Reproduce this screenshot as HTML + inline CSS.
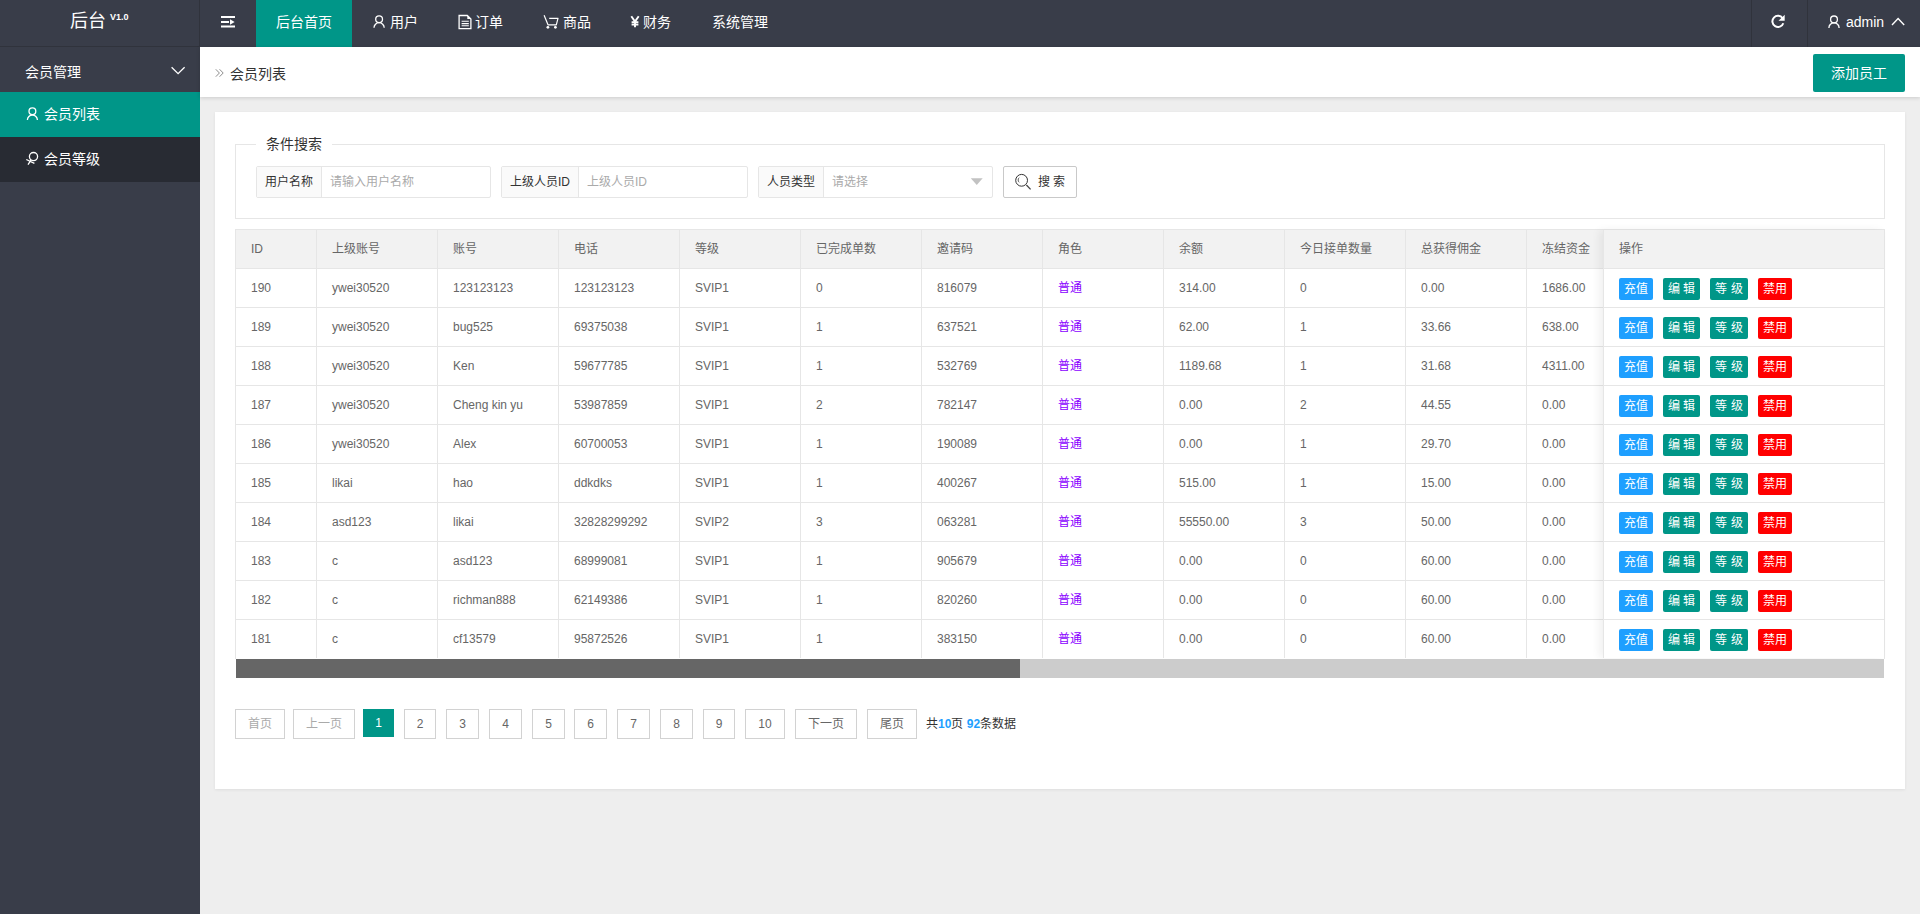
<!DOCTYPE html>
<html lang="zh-CN"><head><meta charset="utf-8"><title>后台</title>
<style>
*{margin:0;padding:0;box-sizing:border-box}
html,body{width:1920px;height:914px;overflow:hidden}
body{font-family:"Liberation Sans",sans-serif;font-size:14px;color:#333;background:#eeeeee;position:relative}
.a{position:absolute}
.hdr{position:absolute;left:0;top:0;width:1920px;height:47px;background:#393D49}
.logo{position:absolute;left:0;top:0;width:200px;height:46px;color:#fff;border-right:1px solid #30333c}
.logo .t{position:absolute;left:70px;top:10px;font-size:18px;line-height:22px}
.logo sup{position:absolute;left:110px;top:11px;font-size:9px;font-weight:bold;line-height:12px}
.nav .it{position:absolute;top:0;height:47px;line-height:45px;color:#fff;font-size:14px;white-space:nowrap}
.act{background:#009688}
.side{position:absolute;left:0;top:46px;width:200px;height:868px;background:#393D49;border-top:1px solid #30333c}
.side .grp{position:absolute;left:0;top:0;width:200px;height:46px;color:#fff}
.side .sub{position:absolute;left:0;width:200px;height:45px;line-height:45px;color:#fff}
.crumb{position:absolute;left:200px;top:47px;width:1720px;height:50px;background:#fff;box-shadow:0 1px 4px rgba(0,0,0,.15)}
.addbtn{position:absolute;left:1813px;top:54px;width:92px;height:38px;line-height:38px;background:#009688;color:#fff;text-align:center;border-radius:2px;font-size:14px}
.card{position:absolute;left:215px;top:112px;width:1690px;height:677px;background:#fff;box-shadow:0 1px 3px rgba(0,0,0,.07)}
.fs{position:absolute;left:235px;top:144px;width:1650px;height:75px;border:1px solid #e6e6e6}
.lg{position:absolute;left:256px;top:135px;padding:0 10px;background:#fff;font-size:14px;line-height:18px;color:#333}
.ig{position:absolute;top:166px;height:32px;border:1px solid #e6e6e6;border-radius:2px;background:#fff}
.ig .lb{position:absolute;left:0;top:0;height:30px;line-height:30px;background:#fafafa;border-right:1px solid #e6e6e6;font-size:12px;color:#333;padding-left:8px}
.ig .ph{position:absolute;top:0;line-height:30px;font-size:12px;color:#aaa}
.sbtn{position:absolute;left:1003px;top:166px;width:74px;height:32px;border:1px solid #c9c9c9;border-radius:2px;background:#fff;font-size:12px;color:#333}
.tb{position:absolute;left:235px;top:229px;width:1650px;height:430px;border:1px solid #e6e6e6;border-bottom:0}
.thbg{position:absolute;left:236px;top:230px;width:1648px;height:38px;background:#f2f2f2}
.hl{position:absolute;left:236px;width:1648px;height:1px;background:#e6e6e6}
.vl{position:absolute;top:230px;width:1px;height:428px;background:#e6e6e6}
.th{position:absolute;top:230px;height:38px;line-height:38px;font-size:12px;color:#666;white-space:nowrap}
.td{position:absolute;height:38px;line-height:38px;font-size:12px;color:#666;white-space:nowrap}
.pu{color:#8a00ff}
.fx{position:absolute;left:1603px;top:230px;width:281px;height:428px;background:#fff;border-left:1px solid #e6e6e6;box-shadow:-4px 0 8px rgba(0,0,0,.06)}
.fxh{position:absolute;left:0;top:0;width:280px;height:38px;background:#f2f2f2}
.fhl{position:absolute;left:0;width:280px;height:1px;background:#e6e6e6}
.bt{position:absolute;height:22px;line-height:22px;text-align:center;color:#fff;font-size:12px;border-radius:2px;white-space:nowrap}
.b1{background:#1E9FFF}.b2{background:#009688}.b3{background:#FF0000}
.sc{position:absolute;left:236px;top:659px;width:1648px;height:19px;background:#cccccc}
.sct{position:absolute;left:0;top:0;width:784px;height:19px;background:#666666}
.pg{position:absolute;top:709px;height:30px;line-height:28px;border:1px solid #d2d2d2;background:#fff;color:#666;font-size:12px;text-align:center}
.pg.dis{color:#aaa}
.pg.cur{height:28px;line-height:28px;background:#009688;border:0;color:#fff}
.pginfo{position:absolute;left:926px;top:709px;line-height:30px;font-size:12px;color:#333;white-space:nowrap}
.pginfo b{color:#1E9FFF}
svg{display:block}
</style></head>
<body>
<div class="hdr">
  <div class="logo"><span class="t">后台</span><sup>V1.0</sup></div>
  <div class="nav">
    <div class="it act" style="left:256px;width:96px;text-align:center">后台首页</div>
    <div class="it" style="left:390px">用户</div>
    <div class="it" style="left:475px">订单</div>
    <div class="it" style="left:563px">商品</div>
    <div class="it" style="left:643px">财务</div>
    <div class="it" style="left:712px">系统管理</div>
    <div class="it" style="left:1846px">admin</div>
  </div>
</div>
<div class="side">
  <div class="grp"><span style="position:absolute;left:25px;top:14px">会员管理</span></div>
  <div class="sub" style="top:45px;background:#009688"><span style="position:absolute;left:44px">会员列表</span></div>
  <div class="sub" style="top:90px;background:#282B33"><span style="position:absolute;left:44px">会员等级</span></div>
</div>
<div class="crumb"><span style="position:absolute;left:30px;top:16px;color:#333">会员列表</span></div>
<div class="addbtn">添加员工</div>
<div class="card"></div>
<div class="fs"></div>
<div class="lg">条件搜索</div>
<div class="ig" style="left:256px;width:235px"><div class="lb" style="width:65px">用户名称</div><div class="ph" style="left:73px">请输入用户名称</div></div>
<div class="ig" style="left:501px;width:247px"><div class="lb" style="width:77px">上级人员ID</div><div class="ph" style="left:85px">上级人员ID</div></div>
<div class="ig" style="left:758px;width:235px"><div class="lb" style="width:65px">人员类型</div><div class="ph" style="left:73px">请选择</div></div>
<div class="sbtn"><span style="position:absolute;left:34px;top:0;line-height:30px">搜&nbsp;索</span></div>
<div class="tb"></div>
<div class="thbg"></div>
<div class="hl" style="top:268px"></div>
<div class="hl" style="top:307px"></div>
<div class="hl" style="top:346px"></div>
<div class="hl" style="top:385px"></div>
<div class="hl" style="top:424px"></div>
<div class="hl" style="top:463px"></div>
<div class="hl" style="top:502px"></div>
<div class="hl" style="top:541px"></div>
<div class="hl" style="top:580px"></div>
<div class="hl" style="top:619px"></div>
<div class="vl" style="left:316px"></div>
<div class="vl" style="left:437px"></div>
<div class="vl" style="left:558px"></div>
<div class="vl" style="left:679px"></div>
<div class="vl" style="left:800px"></div>
<div class="vl" style="left:921px"></div>
<div class="vl" style="left:1042px"></div>
<div class="vl" style="left:1163px"></div>
<div class="vl" style="left:1284px"></div>
<div class="vl" style="left:1405px"></div>
<div class="vl" style="left:1526px"></div>
<div class="th" style="left:251px">ID</div>
<div class="th" style="left:332px">上级账号</div>
<div class="th" style="left:453px">账号</div>
<div class="th" style="left:574px">电话</div>
<div class="th" style="left:695px">等级</div>
<div class="th" style="left:816px">已完成单数</div>
<div class="th" style="left:937px">邀请码</div>
<div class="th" style="left:1058px">角色</div>
<div class="th" style="left:1179px">余额</div>
<div class="th" style="left:1300px">今日接单数量</div>
<div class="th" style="left:1421px">总获得佣金</div>
<div class="th" style="left:1542px">冻结资金</div>
<div class="td" style="left:251px;top:269px">190</div>
<div class="td" style="left:332px;top:269px">ywei30520</div>
<div class="td" style="left:453px;top:269px">123123123</div>
<div class="td" style="left:574px;top:269px">123123123</div>
<div class="td" style="left:695px;top:269px">SVIP1</div>
<div class="td" style="left:816px;top:269px">0</div>
<div class="td" style="left:937px;top:269px">816079</div>
<div class="td pu" style="left:1058px;top:269px">普通</div>
<div class="td" style="left:1179px;top:269px">314.00</div>
<div class="td" style="left:1300px;top:269px">0</div>
<div class="td" style="left:1421px;top:269px">0.00</div>
<div class="td" style="left:1542px;top:269px">1686.00</div>
<div class="td" style="left:251px;top:308px">189</div>
<div class="td" style="left:332px;top:308px">ywei30520</div>
<div class="td" style="left:453px;top:308px">bug525</div>
<div class="td" style="left:574px;top:308px">69375038</div>
<div class="td" style="left:695px;top:308px">SVIP1</div>
<div class="td" style="left:816px;top:308px">1</div>
<div class="td" style="left:937px;top:308px">637521</div>
<div class="td pu" style="left:1058px;top:308px">普通</div>
<div class="td" style="left:1179px;top:308px">62.00</div>
<div class="td" style="left:1300px;top:308px">1</div>
<div class="td" style="left:1421px;top:308px">33.66</div>
<div class="td" style="left:1542px;top:308px">638.00</div>
<div class="td" style="left:251px;top:347px">188</div>
<div class="td" style="left:332px;top:347px">ywei30520</div>
<div class="td" style="left:453px;top:347px">Ken</div>
<div class="td" style="left:574px;top:347px">59677785</div>
<div class="td" style="left:695px;top:347px">SVIP1</div>
<div class="td" style="left:816px;top:347px">1</div>
<div class="td" style="left:937px;top:347px">532769</div>
<div class="td pu" style="left:1058px;top:347px">普通</div>
<div class="td" style="left:1179px;top:347px">1189.68</div>
<div class="td" style="left:1300px;top:347px">1</div>
<div class="td" style="left:1421px;top:347px">31.68</div>
<div class="td" style="left:1542px;top:347px">4311.00</div>
<div class="td" style="left:251px;top:386px">187</div>
<div class="td" style="left:332px;top:386px">ywei30520</div>
<div class="td" style="left:453px;top:386px">Cheng kin yu</div>
<div class="td" style="left:574px;top:386px">53987859</div>
<div class="td" style="left:695px;top:386px">SVIP1</div>
<div class="td" style="left:816px;top:386px">2</div>
<div class="td" style="left:937px;top:386px">782147</div>
<div class="td pu" style="left:1058px;top:386px">普通</div>
<div class="td" style="left:1179px;top:386px">0.00</div>
<div class="td" style="left:1300px;top:386px">2</div>
<div class="td" style="left:1421px;top:386px">44.55</div>
<div class="td" style="left:1542px;top:386px">0.00</div>
<div class="td" style="left:251px;top:425px">186</div>
<div class="td" style="left:332px;top:425px">ywei30520</div>
<div class="td" style="left:453px;top:425px">Alex</div>
<div class="td" style="left:574px;top:425px">60700053</div>
<div class="td" style="left:695px;top:425px">SVIP1</div>
<div class="td" style="left:816px;top:425px">1</div>
<div class="td" style="left:937px;top:425px">190089</div>
<div class="td pu" style="left:1058px;top:425px">普通</div>
<div class="td" style="left:1179px;top:425px">0.00</div>
<div class="td" style="left:1300px;top:425px">1</div>
<div class="td" style="left:1421px;top:425px">29.70</div>
<div class="td" style="left:1542px;top:425px">0.00</div>
<div class="td" style="left:251px;top:464px">185</div>
<div class="td" style="left:332px;top:464px">likai</div>
<div class="td" style="left:453px;top:464px">hao</div>
<div class="td" style="left:574px;top:464px">ddkdks</div>
<div class="td" style="left:695px;top:464px">SVIP1</div>
<div class="td" style="left:816px;top:464px">1</div>
<div class="td" style="left:937px;top:464px">400267</div>
<div class="td pu" style="left:1058px;top:464px">普通</div>
<div class="td" style="left:1179px;top:464px">515.00</div>
<div class="td" style="left:1300px;top:464px">1</div>
<div class="td" style="left:1421px;top:464px">15.00</div>
<div class="td" style="left:1542px;top:464px">0.00</div>
<div class="td" style="left:251px;top:503px">184</div>
<div class="td" style="left:332px;top:503px">asd123</div>
<div class="td" style="left:453px;top:503px">likai</div>
<div class="td" style="left:574px;top:503px">32828299292</div>
<div class="td" style="left:695px;top:503px">SVIP2</div>
<div class="td" style="left:816px;top:503px">3</div>
<div class="td" style="left:937px;top:503px">063281</div>
<div class="td pu" style="left:1058px;top:503px">普通</div>
<div class="td" style="left:1179px;top:503px">55550.00</div>
<div class="td" style="left:1300px;top:503px">3</div>
<div class="td" style="left:1421px;top:503px">50.00</div>
<div class="td" style="left:1542px;top:503px">0.00</div>
<div class="td" style="left:251px;top:542px">183</div>
<div class="td" style="left:332px;top:542px">c</div>
<div class="td" style="left:453px;top:542px">asd123</div>
<div class="td" style="left:574px;top:542px">68999081</div>
<div class="td" style="left:695px;top:542px">SVIP1</div>
<div class="td" style="left:816px;top:542px">1</div>
<div class="td" style="left:937px;top:542px">905679</div>
<div class="td pu" style="left:1058px;top:542px">普通</div>
<div class="td" style="left:1179px;top:542px">0.00</div>
<div class="td" style="left:1300px;top:542px">0</div>
<div class="td" style="left:1421px;top:542px">60.00</div>
<div class="td" style="left:1542px;top:542px">0.00</div>
<div class="td" style="left:251px;top:581px">182</div>
<div class="td" style="left:332px;top:581px">c</div>
<div class="td" style="left:453px;top:581px">richman888</div>
<div class="td" style="left:574px;top:581px">62149386</div>
<div class="td" style="left:695px;top:581px">SVIP1</div>
<div class="td" style="left:816px;top:581px">1</div>
<div class="td" style="left:937px;top:581px">820260</div>
<div class="td pu" style="left:1058px;top:581px">普通</div>
<div class="td" style="left:1179px;top:581px">0.00</div>
<div class="td" style="left:1300px;top:581px">0</div>
<div class="td" style="left:1421px;top:581px">60.00</div>
<div class="td" style="left:1542px;top:581px">0.00</div>
<div class="td" style="left:251px;top:620px">181</div>
<div class="td" style="left:332px;top:620px">c</div>
<div class="td" style="left:453px;top:620px">cf13579</div>
<div class="td" style="left:574px;top:620px">95872526</div>
<div class="td" style="left:695px;top:620px">SVIP1</div>
<div class="td" style="left:816px;top:620px">1</div>
<div class="td" style="left:937px;top:620px">383150</div>
<div class="td pu" style="left:1058px;top:620px">普通</div>
<div class="td" style="left:1179px;top:620px">0.00</div>
<div class="td" style="left:1300px;top:620px">0</div>
<div class="td" style="left:1421px;top:620px">60.00</div>
<div class="td" style="left:1542px;top:620px">0.00</div>
<div class="fx"><div class="fxh"></div>
<div class="fhl" style="top:38px"></div>
<div class="fhl" style="top:77px"></div>
<div class="fhl" style="top:116px"></div>
<div class="fhl" style="top:155px"></div>
<div class="fhl" style="top:194px"></div>
<div class="fhl" style="top:233px"></div>
<div class="fhl" style="top:272px"></div>
<div class="fhl" style="top:311px"></div>
<div class="fhl" style="top:350px"></div>
<div class="fhl" style="top:389px"></div>
</div>
<div class="th" style="left:1619px">操作</div>
<div class="bt b1" style="left:1619px;top:278px;width:34px">充值</div>
<div class="bt b2" style="left:1663px;top:278px;width:37px">编&nbsp;辑</div>
<div class="bt b2" style="left:1710px;top:278px;width:38px">等&nbsp;级</div>
<div class="bt b3" style="left:1758px;top:278px;width:34px">禁用</div>
<div class="bt b1" style="left:1619px;top:317px;width:34px">充值</div>
<div class="bt b2" style="left:1663px;top:317px;width:37px">编&nbsp;辑</div>
<div class="bt b2" style="left:1710px;top:317px;width:38px">等&nbsp;级</div>
<div class="bt b3" style="left:1758px;top:317px;width:34px">禁用</div>
<div class="bt b1" style="left:1619px;top:356px;width:34px">充值</div>
<div class="bt b2" style="left:1663px;top:356px;width:37px">编&nbsp;辑</div>
<div class="bt b2" style="left:1710px;top:356px;width:38px">等&nbsp;级</div>
<div class="bt b3" style="left:1758px;top:356px;width:34px">禁用</div>
<div class="bt b1" style="left:1619px;top:395px;width:34px">充值</div>
<div class="bt b2" style="left:1663px;top:395px;width:37px">编&nbsp;辑</div>
<div class="bt b2" style="left:1710px;top:395px;width:38px">等&nbsp;级</div>
<div class="bt b3" style="left:1758px;top:395px;width:34px">禁用</div>
<div class="bt b1" style="left:1619px;top:434px;width:34px">充值</div>
<div class="bt b2" style="left:1663px;top:434px;width:37px">编&nbsp;辑</div>
<div class="bt b2" style="left:1710px;top:434px;width:38px">等&nbsp;级</div>
<div class="bt b3" style="left:1758px;top:434px;width:34px">禁用</div>
<div class="bt b1" style="left:1619px;top:473px;width:34px">充值</div>
<div class="bt b2" style="left:1663px;top:473px;width:37px">编&nbsp;辑</div>
<div class="bt b2" style="left:1710px;top:473px;width:38px">等&nbsp;级</div>
<div class="bt b3" style="left:1758px;top:473px;width:34px">禁用</div>
<div class="bt b1" style="left:1619px;top:512px;width:34px">充值</div>
<div class="bt b2" style="left:1663px;top:512px;width:37px">编&nbsp;辑</div>
<div class="bt b2" style="left:1710px;top:512px;width:38px">等&nbsp;级</div>
<div class="bt b3" style="left:1758px;top:512px;width:34px">禁用</div>
<div class="bt b1" style="left:1619px;top:551px;width:34px">充值</div>
<div class="bt b2" style="left:1663px;top:551px;width:37px">编&nbsp;辑</div>
<div class="bt b2" style="left:1710px;top:551px;width:38px">等&nbsp;级</div>
<div class="bt b3" style="left:1758px;top:551px;width:34px">禁用</div>
<div class="bt b1" style="left:1619px;top:590px;width:34px">充值</div>
<div class="bt b2" style="left:1663px;top:590px;width:37px">编&nbsp;辑</div>
<div class="bt b2" style="left:1710px;top:590px;width:38px">等&nbsp;级</div>
<div class="bt b3" style="left:1758px;top:590px;width:34px">禁用</div>
<div class="bt b1" style="left:1619px;top:629px;width:34px">充值</div>
<div class="bt b2" style="left:1663px;top:629px;width:37px">编&nbsp;辑</div>
<div class="bt b2" style="left:1710px;top:629px;width:38px">等&nbsp;级</div>
<div class="bt b3" style="left:1758px;top:629px;width:34px">禁用</div>

<svg class="a" style="left:0;top:0" width="1920" height="200" viewBox="0 0 1920 200" fill="none">
  <!-- hamburger -->
  <rect x="221" y="16" width="14" height="2" fill="#fff"/>
  <rect x="221" y="21" width="8" height="2" fill="#fff"/>
  <path d="M230 19.2 L234.6 22 L230 24.8 Z" fill="#fff"/>
  <rect x="221" y="25.5" width="14" height="2" fill="#fff"/>
  <!-- nav user -->
  <circle cx="379.1" cy="19.3" r="3.4" stroke="#fff" stroke-width="1.3"/>
  <path d="M374 27.8 A5.1 5.1 0 0 1 384.2 27.8" stroke="#fff" stroke-width="1.3"/>
  <!-- doc -->
  <path d="M459.1 15.5 H467.3 L470.9 19.1 V28.6 H459.1 Z" stroke="#fff" stroke-width="1.3" stroke-linejoin="miter"/>
  <path d="M467.3 15.5 V19.1 H470.9 Z" fill="#fff"/>
  <path d="M461.6 21.3 H468.8 M461.6 23.6 H468.8 M461.6 25.8 H468.8" stroke="#fff" stroke-width="1.1"/>
  <!-- cart -->
  <path d="M544.1 15.2 L548 24.8 H556.3 L558 18.3 H549.2" stroke="#fff" stroke-width="1.2" stroke-linejoin="round"/>
  <circle cx="547.9" cy="27.3" r="1.4" fill="#fff"/>
  <circle cx="555.4" cy="27.3" r="1.4" fill="#fff"/>
  <!-- yen -->
  <path d="M631.3 16.2 L635 21.6 L638.7 16.2 M635 21.6 V27.3 M631.6 22.3 H638.4 M631.6 24.6 H638.4" stroke="#fff" stroke-width="1.9"/>
  <!-- refresh -->
  <path d="M1782.6 18.2 A5.6 5.6 0 1 0 1783.3 23.2" stroke="#fff" stroke-width="2"/>
  <path d="M1778.5 20.8 L1784.7 14.8 V20.8 Z" fill="#fff"/>
  <!-- admin user -->
  <circle cx="1834" cy="19.4" r="3.4" stroke="#fff" stroke-width="1.3"/>
  <path d="M1828.9 27.9 A5.1 5.1 0 0 1 1839.1 27.9" stroke="#fff" stroke-width="1.3"/>
  <!-- chevron up -->
  <path d="M1892 25 L1898.1 18.6 L1904.2 25" stroke="#fff" stroke-width="1.4"/>
  <!-- header dividers -->
  <rect x="1751" y="0" width="1" height="47" fill="#30333c"/>
  <rect x="1807" y="0" width="1" height="47" fill="#30333c"/>
  <!-- sidebar chevron -->
  <path d="M171.6 67.3 L178.1 73.6 L184.6 67.3" stroke="#fff" stroke-width="1.3"/>
  <!-- sidebar user -->
  <circle cx="32.4" cy="111.3" r="3.4" stroke="#fff" stroke-width="1.3"/>
  <path d="M27.4 120 A5 5 0 0 1 37.4 120" stroke="#fff" stroke-width="1.3"/>
  <!-- level icon -->
  <circle cx="33.5" cy="156.6" r="4.1" stroke="#fff" stroke-width="1.3"/>
  <path d="M26.3 159.5 L34.4 163.4 M28 164.6 L31 160.2" stroke="#fff" stroke-width="1.3"/>
  <!-- crumb arrows -->
  <path d="M215.8 69.3 L219.4 73 L215.8 76.7 M219.6 69.3 L223.2 73 L219.6 76.7" stroke="#8c8c8c" stroke-width="1"/>
</svg>
<svg class="a" style="left:0;top:0" width="1920" height="200" viewBox="0 0 1920 200" fill="none">
  <!-- search icon -->
  <circle cx="1021.6" cy="180.3" r="5.9" stroke="#333" stroke-width="1"/>
  <path d="M1019.2 177.7 A3 3 0 0 0 1019.2 182.3" stroke="#333" stroke-width="0.8"/>
  <path d="M1026.4 185 L1030.6 189.4" stroke="#444" stroke-width="1.3"/>
  <!-- dropdown -->
  <path d="M970.8 178.3 H982.7 L976.75 184.9 Z" fill="#c2c2c2"/>
</svg>

<div class="sc"><div class="sct"></div></div>
<div class="pg dis" style="left:235px;width:50px">首页</div>
<div class="pg dis" style="left:293px;width:62px">上一页</div>
<div class="pg cur" style="left:363px;width:31px">1</div>
<div class="pg" style="left:404px;width:32px">2</div>
<div class="pg" style="left:446px;width:33px">3</div>
<div class="pg" style="left:489px;width:33px">4</div>
<div class="pg" style="left:532px;width:33px">5</div>
<div class="pg" style="left:574px;width:33px">6</div>
<div class="pg" style="left:617px;width:33px">7</div>
<div class="pg" style="left:660px;width:33px">8</div>
<div class="pg" style="left:703px;width:32px">9</div>
<div class="pg" style="left:745px;width:40px">10</div>
<div class="pg" style="left:795px;width:62px">下一页</div>
<div class="pg" style="left:867px;width:50px">尾页</div>
<div class="pginfo">共<b>10</b>页 <b>92</b>条数据</div>
</body></html>
